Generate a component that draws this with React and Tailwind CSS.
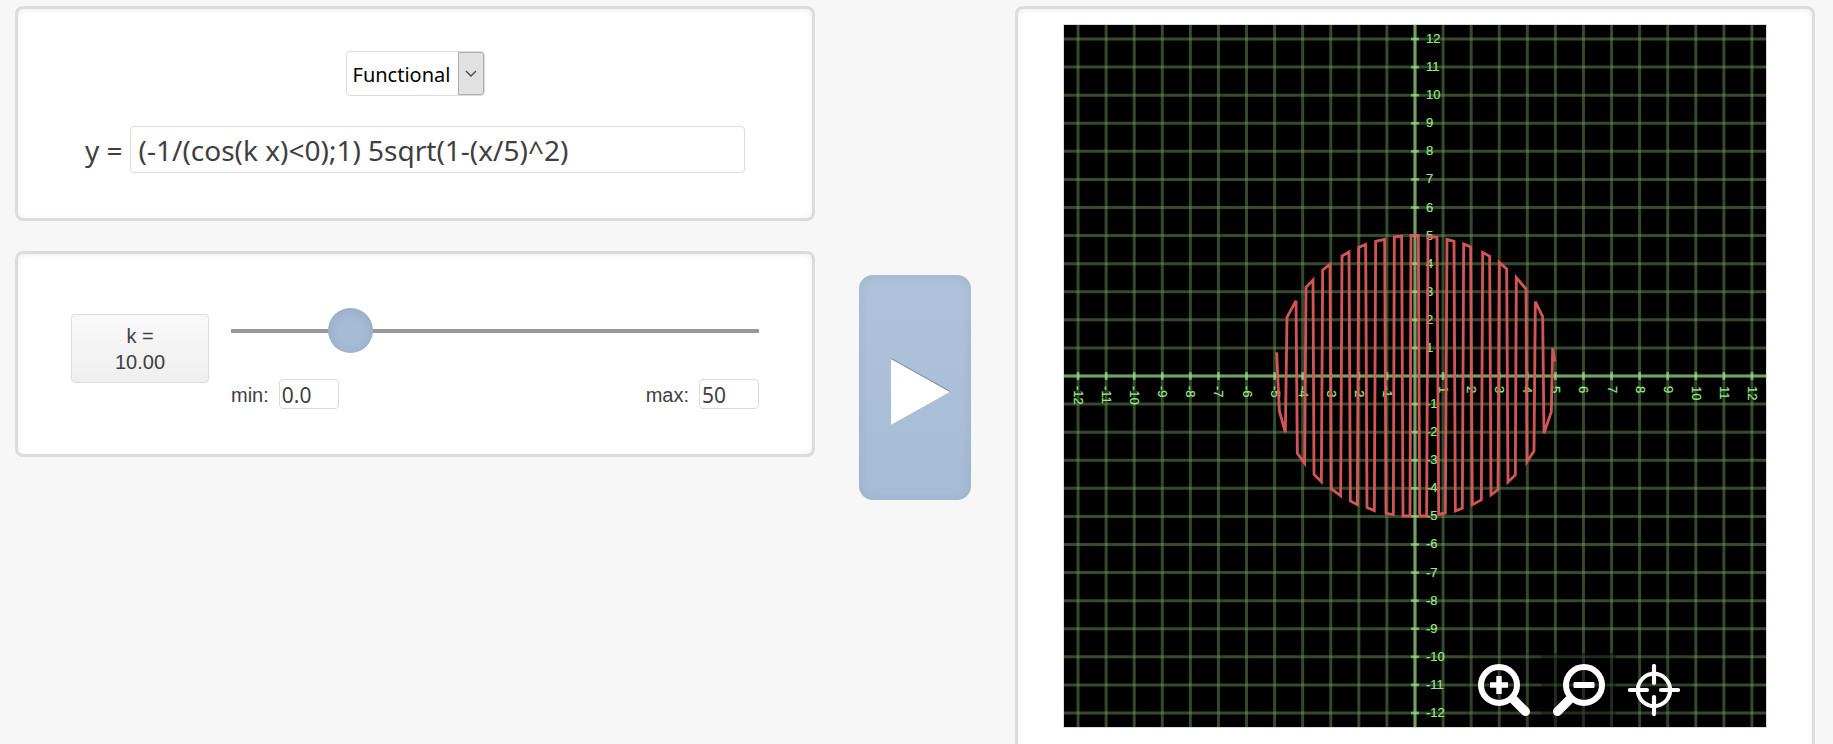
import { useState } from "react";

const SIZE = 702;
const UNIT = 28.08;
const CENTER = SIZE / 2;
const TICKS = Array.from({ length: 25 }, (_, i) => i - 12);

const CURVE =
  "110,427 118,603 136,667 141,322 168,272 172,730 194,760 198,232 219,210 222,793 244,815 248,180 270,163 274,837 302,857 306,138 327,126 331,873 352,884 356,112 377,103 381,893 403,902 407,94 434,88 438,910 460,914 463,81 485,78 489,918 510,918 513,76 535,76 539,918 560,918 564,79 591,82 596,913 616,909 621,88 642,94 646,903 667,895 671,102 692,111 697,884 724,870 728,127 749,139 753,855 774,839 778,157 800,177 804,816 826,795 829,203 858,237 861,755 882,723 886,275 908,320 912,670 934,605 938,415 944,455";

function Panel({ className = "", children }) {
  return (
    <section
      className={`rounded-lg border-[3px] border-[#dcdcdc] bg-white shadow-[inset_0_1px_6px_rgba(0,0,0,0.07)] ${className}`}
    >
      {children}
    </section>
  );
}

function Graph() {
  return (
    <svg viewBox={`0 0 ${SIZE} ${SIZE}`} className="block w-full bg-black" role="img" aria-label="Graph">
      <g stroke="#6c9a5e" strokeOpacity="0.48" strokeWidth="3">
        {TICKS.map((t) => (
          <line key={`v${t}`} x1={CENTER + t * UNIT} x2={CENTER + t * UNIT} y1="0" y2={SIZE} />
        ))}
        {TICKS.map((t) => (
          <line key={`h${t}`} y1={CENTER + t * UNIT} y2={CENTER + t * UNIT} x1="0" x2={SIZE} />
        ))}
      </g>
      <g stroke="#8cc87c" strokeOpacity="0.7" strokeWidth="3">
        <line x1={CENTER} x2={CENTER} y1="0" y2={SIZE} />
        <line y1={CENTER} y2={CENTER} x1="0" x2={SIZE} />
      </g>
      <g stroke="#90e07c" strokeOpacity="0.75" strokeWidth="2.6">
        {TICKS.filter((t) => t !== 0).map((t) => (
          <g key={t}>
            <line x1={CENTER + t * UNIT} x2={CENTER + t * UNIT} y1={CENTER - 4} y2={CENTER + 4} />
            <line y1={CENTER + t * UNIT} y2={CENTER + t * UNIT} x1={CENTER - 4} x2={CENTER + 4} />
          </g>
        ))}
      </g>
      <g
        fill="#98e884"
        stroke="#98e884"
        strokeWidth="0.2"
        fontFamily="'Liberation Sans', Arial, sans-serif"
        fontSize="13"
      >
        {TICKS.filter((t) => t !== 0).map((t) => (
          <g key={t}>
            <text x={CENTER + 11} y={CENTER - t * UNIT + 4}>
              {t}
            </text>
            <text transform={`translate(${CENTER + t * UNIT - 4} ${CENTER + 10}) rotate(90)`}>{t}</text>
          </g>
        ))}
      </g>
      <polyline
        points={CURVE}
        transform="translate(176 185) scale(0.33333)"
        fill="none"
        stroke="#dc5a58"
        strokeOpacity="0.95"
        strokeWidth="8.5"
      />
    </svg>
  );
}

function ZoomInIcon() {
  return (
    <svg viewBox="0 0 52 52" className="size-[52px]" fill="none" stroke="#fff" aria-hidden="true">
      <circle cx="21" cy="21" r="18" strokeWidth="6" />
      <path d="M36 36L47.5 47.5" strokeWidth="9" strokeLinecap="round" />
      <path d="M12 21H30M21 12V30" strokeWidth="5.4" />
    </svg>
  );
}

function ZoomOutIcon() {
  return (
    <svg viewBox="0 0 52 52" className="size-[52px]" fill="none" stroke="#fff" aria-hidden="true">
      <circle cx="31" cy="21" r="18" strokeWidth="6" />
      <path d="M16 36L4.5 47.5" strokeWidth="9" strokeLinecap="round" />
      <path d="M22 21H40" strokeWidth="6" />
      <path d="M21.5 19V23M40.5 19V23" strokeWidth="2" strokeLinecap="round" />
    </svg>
  );
}

function TargetIcon() {
  return (
    <svg viewBox="0 0 52 52" className="size-[52px]" fill="none" stroke="#fff" aria-hidden="true">
      <circle cx="26" cy="26" r="16.2" strokeWidth="4" />
      <path d="M26 2V19M26 33V50M2 26H19M33 26H50" strokeWidth="4.2" strokeLinecap="round" />
    </svg>
  );
}

function RangeLimit({ id, value }) {
  return (
    <div className="flex items-center gap-2.5">
      <label htmlFor={id} className="pt-[3px]">
        {id}:
      </label>
      <input
        id={id}
        defaultValue={value}
        className="h-[30px] w-[60px] rounded border border-[#dcdcdc] bg-white px-0.5 pt-0.5 font-['Noto_Sans',sans-serif] text-[21px]"
      />
    </div>
  );
}

export default function App() {
  const [k, setK] = useState(10);
  return (
    <main className="flex min-h-screen items-start overflow-hidden bg-[#f7f7f7] pt-1.5 pr-[18px] pl-[15px] font-['Liberation_Sans',Arial,sans-serif] text-xl text-[#3f3f3f]">
      <div className="flex w-[800px] shrink flex-col gap-[30px]">
        <Panel className="px-[67px] pt-[42px] pb-[45px] font-['Noto_Sans',sans-serif]">
          <div className="flex justify-center">
            <div className="relative">
              <select
                aria-label="Plot type"
                className="block h-[45px] w-[139px] appearance-none rounded border border-[#dcdcdc] bg-white pt-0.5 pl-1.5 text-[20px] text-black"
              >
                <option>Functional</option>
              </select>
              <span className="pointer-events-none absolute inset-y-px right-px flex w-[26px] items-center justify-center rounded-r-[3px] border border-[#adadad] bg-[#e1e1e1]">
                <svg viewBox="0 0 12 8" className="h-2 w-3" fill="none" stroke="#444" strokeWidth="1.3" aria-hidden="true">
                  <path d="M1 1L6 6L11 1" />
                </svg>
              </span>
            </div>
          </div>
          <div className="mt-[30px] flex items-center gap-[7px] text-[28px]">
            <label htmlFor="formula" className="leading-none">
              y =
            </label>
            <input
              id="formula"
              defaultValue="(-1/(cos(k x)<0);1) 5sqrt(1-(x/5)^2)"
              className="h-[47px] min-w-0 flex-1 rounded border border-[#dcdcdc] bg-white px-2"
            />
          </div>
        </Panel>

        <Panel className="flex items-start gap-[22px] pt-[54px] pr-[53px] pb-[45px] pl-[53px]">
          <button className="mt-[6px] h-[69px] w-[138px] shrink-0 rounded border border-[#dcdcdc] bg-linear-to-b from-[#f9f9f9] to-[#efefef] leading-[26px]">
            k =<br />
            {k.toFixed(2)}
          </button>
          <div className="min-w-0 flex-1">
            <input
              type="range"
              aria-label="k"
              min="0"
              max="50"
              step="0.01"
              value={k}
              onChange={(e) => setK(Number(e.target.value))}
              className="block h-[45px] w-full appearance-none bg-transparent [&::-webkit-slider-runnable-track]:h-1 [&::-webkit-slider-runnable-track]:bg-[#999] [&::-webkit-slider-thumb]:-mt-[21px] [&::-webkit-slider-thumb]:size-[45px] [&::-webkit-slider-thumb]:appearance-none [&::-webkit-slider-thumb]:rounded-full [&::-webkit-slider-thumb]:bg-[#a6bbd6] [&::-webkit-slider-thumb]:shadow-[inset_0_2px_12px_rgba(0,0,0,0.1)]"
            />
            <div className="mt-[25px] flex justify-between">
              <RangeLimit id="min" value="0.0" />
              <RangeLimit id="max" value="50" />
            </div>
          </div>
        </Panel>
      </div>

      <button
        aria-label="Play"
        className="mx-11 mt-[269px] flex h-[225px] w-28 shrink-0 items-center justify-center rounded-[14px] bg-linear-to-b from-[#afc3dc] to-[#a6bbd5] pt-2 pl-2.5 shadow-[inset_0_2px_12px_rgba(0,0,0,0.08)]"
      >
        <svg viewBox="0 0 60 68" className="h-[68px] w-[60px]" aria-hidden="true">
          <path d="M1 0L60 33L60 34L1 67Z" fill="#70849f" />
          <path d="M1 1L60 34L1 67Z" fill="#fff" />
        </svg>
      </button>

      <Panel className="min-w-0 flex-1 px-[45px] pt-[15px] pb-8">
        <div className="relative border border-[#dcdcdc]">
          <Graph />
          <div className="absolute right-[75px] bottom-0 flex">
            <button aria-label="Zoom in" className="flex h-[74px] w-[75px] items-center justify-center bg-black/10">
              <ZoomInIcon />
            </button>
            <button aria-label="Zoom out" className="flex h-[74px] w-[75px] items-center justify-center bg-black/40">
              <ZoomOutIcon />
            </button>
            <button aria-label="Center view" className="flex h-[74px] w-[75px] items-center justify-center bg-black/10">
              <TargetIcon />
            </button>
          </div>
        </div>
      </Panel>
    </main>
  );
}
